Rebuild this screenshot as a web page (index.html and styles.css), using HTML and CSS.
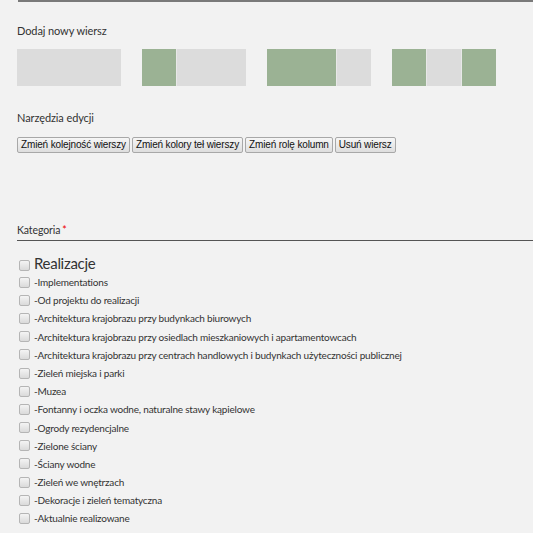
FILE: index.html
```html
<!DOCTYPE html>
<html lang="pl">
<head>
<meta charset="utf-8">
<link rel="stylesheet" href="styles.css">
</head>
<body>
<div class="page">
  <div class="topline"></div>
  <h3 class="label first">Dodaj nowy wiersz</h3>
  <div class="layouts">
    <div class="layout"><span class="c gray" style="flex:1"></span></div>
    <div class="layout"><span class="c green" style="flex:1"></span><span class="c gray" style="flex:2"></span></div>
    <div class="layout"><span class="c green" style="flex:2"></span><span class="c gray" style="flex:1"></span></div>
    <div class="layout"><span class="c green" style="flex:1"></span><span class="c gray" style="flex:1"></span><span class="c green" style="flex:1"></span></div>
  </div>
  <h3 class="label tools">Narzędzia edycji</h3>
  <div class="buttons">
    <button>Zmień kolejność wierszy</button>
    <button>Zmień kolory teł wierszy</button>
    <button>Zmień rolę kolumn</button>
    <button>Usuń wiersz</button>
  </div>
  <div class="field">
    <div class="field-label">Kategoria<span class="req">*</span></div>
    <ul class="cats">
      <li class="top"><span class="cb"></span>Realizacje</li>
      <li><span class="cb"></span>-Implementations</li>
      <li><span class="cb"></span>-Od projektu do realizacji</li>
      <li><span class="cb"></span>-Architektura krajobrazu przy budynkach biurowych</li>
      <li><span class="cb"></span>-Architektura krajobrazu przy osiedlach mieszkaniowych i apartamentowcach</li>
      <li><span class="cb"></span>-Architektura krajobrazu przy centrach handlowych i budynkach użyteczności publicznej</li>
      <li><span class="cb"></span>-Zieleń miejska i parki</li>
      <li><span class="cb"></span>-Muzea</li>
      <li><span class="cb"></span>-Fontanny i oczka wodne, naturalne stawy kąpielowe</li>
      <li><span class="cb"></span>-Ogrody rezydencjalne</li>
      <li><span class="cb"></span>-Zielone ściany</li>
      <li><span class="cb"></span>-Ściany wodne</li>
      <li><span class="cb"></span>-Zieleń we wnętrzach</li>
      <li><span class="cb"></span>-Dekoracje i zieleń tematyczna</li>
      <li><span class="cb"></span>-Aktualnie realizowane</li>
    </ul>
  </div>
</div>
</body>
</html>
```
FILE: styles.css
```css
html, body {
  margin: 0;
  padding: 0;
  background: #f2f2f2;
}
body {
  font-family: "Lato", "Open Sans", sans-serif;
  color: #333;
}
.page {
  padding-left: 17px;
}
.topline {
  height: 2px;
  background: #7a7a7a;
  margin-left: 1px;
}
.label {
  margin: 0;
  font-size: 11px;
  letter-spacing: -0.1px;
  font-weight: normal;
  color: #333;
  line-height: 16px;
}
.label.first {
  padding-top: 21px;
}
.layouts {
  display: flex;
  gap: 21px;
  margin-top: 10px;
}
.layout {
  display: flex;
  width: 104px;
  height: 37px;
  gap: 1px;
  background: #e8e8e8;
}
.c {
  display: block;
}
.gray { background: #dcdcdc; }
.green { background: #9bb294; }
.label.tools {
  margin-top: 24px;
}
.buttons {
  display: flex;
  gap: 2px;
  margin-top: 11px;
}
.buttons button {
  margin: 0;
  font-family: "Liberation Sans", Arial, sans-serif;
  font-size: 10px;
  letter-spacing: -0.15px;
  color: #111;
  background: linear-gradient(#f6f6f6, #dedede);
  border: 1px solid #a8a8a8;
  border-radius: 2px;
  height: 16px;
  padding: 0 3px;
  line-height: 14px;
}
.field {
  margin-top: 70px;
}
.field-label {
  font-size: 10.5px;
  letter-spacing: -0.1px;
  line-height: 14px;
  color: #333;
  padding-bottom: 3px;
  border-bottom: 1px solid #555;
}
.req {
  color: #e00;
  margin-left: 2px;
}
.cats {
  list-style: none;
  margin: 0;
  padding: 12px 0 0 2px;
}
.cats li {
  display: flex;
  align-items: center;
  font-size: 10px;
  letter-spacing: -0.2px;
  line-height: 18.2px;
  height: 18.2px;
  color: #333;
}
.cats li.top {
  font-size: 15px;
  letter-spacing: -0.3px;
  height: 20px;
  line-height: 20px;
}
.cb {
  width: 9px;
  height: 9px;
  border: 1px solid #b5b5b5;
  border-radius: 2px;
  background: linear-gradient(#f4f4f4, #dadada);
  margin-right: 4px;
  flex: none;
}
.cats li.top .cb {
  margin-top: 4px;
}
```
